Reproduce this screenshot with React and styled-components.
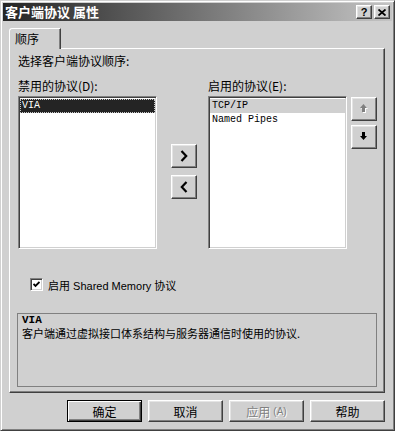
import React from 'react'
import styled, { createGlobalStyle } from 'styled-components'

const GlobalStyle = createGlobalStyle`
  body {
    margin: 0;
    background: #d0d0d0;
  }
  * {
    box-sizing: border-box;
  }
`

const ui = `'Noto Sans CJK SC', 'Liberation Sans', sans-serif`
const mono = `'Liberation Mono', 'Noto Sans CJK SC', monospace`

const Window = styled.div`
  width: 395px;
  height: 431px;
  display: flex;
  flex-direction: column;
  padding: 2px;
  background: #d0d0d0;
  border: 1px solid;
  border-color: #d0d0d0 #404040 #404040 #d0d0d0;
  box-shadow: inset 1px 1px #fff, inset -1px -1px #808080;
  font-family: ${ui};
  font-size: 12px;
  color: #000;
`

const TitleBar = styled.div`
  height: 18px;
  display: flex;
  align-items: center;
  padding: 0 2px 0 2px;
  background: linear-gradient(to right, #242424, #c4c4c4);
`

const TitleText = styled.div`
  flex: 1;
  color: #fff;
  font-weight: 700;
  font-size: 13px;
  line-height: 18px;
  white-space: pre;
`

const TitleButtons = styled.div`
  display: flex;
  gap: 2px;
`

const Raised = styled.button`
  display: flex;
  align-items: center;
  justify-content: center;
  padding: 0;
  background: #d0d0d0;
  border: 1px solid;
  border-color: #fff #404040 #404040 #fff;
  box-shadow: inset -1px -1px #808080, inset 1px 1px #e4e4e4;
  font-family: ${ui};
  color: #000;
`

const TitleButton = styled(Raised)`
  width: 16px;
  height: 14px;
  font-family: 'Liberation Sans', sans-serif;
  font-weight: 700;
  font-size: 11px;
  line-height: 1;
`

const Body = styled.div`
  display: flex;
  flex-direction: column;
  padding: 7px 7px 0 6px;
`

const TabStrip = styled.div`
  display: flex;
`

const Tab = styled.div`
  position: relative;
  z-index: 1;
  width: 52px;
  height: 21px;
  margin-bottom: -1px;
  padding: 0 0 1px 5px;
  display: flex;
  align-items: center;
  background: #d0d0d0;
  border: 1px solid;
  border-bottom: none;
  border-color: #fff #404040 transparent #fff;
  border-top-left-radius: 3px;
  box-shadow: inset -1px 0 #808080;
  font-size: 12px;
`

const Panel = styled.div`
  width: 376px;
  height: 345px;
  display: flex;
  flex-direction: column;
  padding: 5px 0 0 8px;
  border: 1px solid;
  border-color: #fff #404040 #404040 #fff;
  box-shadow: inset -1px -1px #808080;
`

const Line = styled.div`
  font-size: 12px;
  line-height: 14px;
  white-space: nowrap;
`

const ListsRow = styled.div`
  display: flex;
  align-items: flex-start;
  margin-top: 11px;
`

const ListColumn = styled.div`
  display: flex;
  flex-direction: column;
  gap: 3px;
  width: 139px;
`

const ListBox = styled.div`
  height: 153px;
  padding: 2px 1px 1px 1px;
  background: #fff;
  border: 1px solid;
  border-color: #808080 #fff #fff #808080;
  box-shadow: inset 1px 1px #404040, inset -1px -1px #d0d0d0;
`

const ListItem = styled.div`
  height: 14px;
  padding-left: 2px;
  font-family: ${mono};
  font-size: 10px;
  line-height: 14px;
  white-space: pre;
  background: ${(p) => (p.$focused ? '#242424' : p.$selected ? '#d0d0d0' : 'transparent')};
  color: ${(p) => (p.$focused ? '#fff' : '#000')};
  outline: ${(p) => (p.$focused ? '1px dotted #c8c8c8' : 'none')};
  outline-offset: -1px;
`

const ButtonStack = styled.div`
  display: flex;
  flex-direction: column;
  gap: ${(p) => p.$gap}px;
  margin: ${(p) => p.$top}px ${(p) => p.$right}px 0 ${(p) => p.$left}px;
`

const SquareButton = styled(Raised)`
  width: 26px;
  height: 24px;
`

const CheckRow = styled.label`
  display: flex;
  align-items: center;
  gap: 5px;
  margin: 29px 0 0 12px;
  height: 13px;
  font-family: 'Liberation Sans', 'Noto Sans CJK SC', sans-serif;
  font-size: 11px;
  white-space: pre;
`

const CheckBox = styled.span`
  width: 13px;
  height: 13px;
  display: flex;
  align-items: center;
  justify-content: center;
  background: #fff;
  border: 1px solid;
  border-color: #808080 #fff #fff #808080;
  box-shadow: inset 1px 1px #404040, inset -1px -1px #d0d0d0;
`

const DescBox = styled.div`
  width: 360px;
  height: 74px;
  margin: 22px 0 0 -1px;
  padding: 0 4px;
  border: 1px solid #808080;
`

const DescTitle = styled.div`
  font-family: ${mono};
  font-weight: 700;
  font-size: 11px;
  line-height: 13px;
`

const DescText = styled.div`
  font-family: ${ui};
  font-size: 11px;
  line-height: 13px;
  white-space: nowrap;
`

const Footer = styled.div`
  display: flex;
  justify-content: flex-end;
  gap: 6px;
  margin-top: 7px;
`

const DialogButton = styled(Raised)`
  width: 75px;
  height: 22px;
  font-size: 12px;
  ${(p) =>
    p.$default &&
    `
    border: 1px solid #000;
    box-shadow: inset 1px 1px #fff, inset -1px -1px #404040, inset -2px -2px #808080;
  `}
  &:disabled {
    color: #808080;
    text-shadow: 1px 1px #fff;
  }
`

const Small = styled.span`
  font-family: 'Liberation Sans', sans-serif;
  font-size: 10px;
  margin-left: 3px;
`

const Chevron = ({ left }) => (
  <svg width="8" height="12" viewBox="0 0 8 12">
    <polyline
      points={left ? '6.5,1 1.8,6 6.5,11' : '1.5,1 6.2,6 1.5,11'}
      fill="none"
      stroke="#000"
      strokeWidth="2.2"
    />
  </svg>
)

const Arrow = ({ down, disabled }) => {
  const pts = down ? '2,0 5,0 5,4 7,4 3.5,8 0,4 2,4' : '3.5,0 7,4 5,4 5,8 2,8 2,4 0,4'
  return (
    <svg width="9" height="10" viewBox="0 0 9 10">
      {disabled && <polygon points={pts} fill="#fff" transform="translate(1 1)" />}
      <polygon points={pts} fill={disabled ? '#808080' : '#000'} />
    </svg>
  )
}

const CloseGlyph = () => (
  <svg width="8" height="7" viewBox="0 0 8 7">
    <path d="M0.5 0.5 L7.5 6.5 M7.5 0.5 L0.5 6.5" stroke="#000" strokeWidth="1.8" />
  </svg>
)

const Check = () => (
  <svg width="7" height="7" viewBox="0 0 7 7">
    <polyline points="0.5,3 2.5,5 6.5,1" fill="none" stroke="#000" strokeWidth="1.8" />
  </svg>
)

const App = () => {
  return (
    <>
      <GlobalStyle />
      <Window>
        <TitleBar>
          <TitleText>客户端协议 属性</TitleText>
          <TitleButtons>
            <TitleButton>?</TitleButton>
            <TitleButton>
              <CloseGlyph />
            </TitleButton>
          </TitleButtons>
        </TitleBar>
        <Body>
          <TabStrip>
            <Tab>顺序</Tab>
          </TabStrip>
          <Panel>
            <Line>选择客户端协议顺序:</Line>
            <ListsRow>
              <ListColumn>
                <Line>禁用的协议(D):</Line>
                <ListBox>
                  <ListItem $focused>VIA</ListItem>
                </ListBox>
              </ListColumn>
              <ButtonStack $top={65} $gap={7} $left={14} $right={11}>
                <SquareButton>
                  <Chevron />
                </SquareButton>
                <SquareButton>
                  <Chevron left />
                </SquareButton>
              </ButtonStack>
              <ListColumn>
                <Line>启用的协议(E):</Line>
                <ListBox>
                  <ListItem $selected>TCP/IP</ListItem>
                  <ListItem>Named Pipes</ListItem>
                </ListBox>
              </ListColumn>
              <ButtonStack $top={18} $gap={4} $left={4} $right={0}>
                <SquareButton>
                  <Arrow disabled />
                </SquareButton>
                <SquareButton>
                  <Arrow down />
                </SquareButton>
              </ButtonStack>
            </ListsRow>
            <CheckRow>
              <CheckBox>
                <Check />
              </CheckBox>
              启用 Shared Memory 协议
            </CheckRow>
            <DescBox>
              <DescTitle>VIA</DescTitle>
              <DescText>客户端通过虚拟接口体系结构与服务器通信时使用的协议.</DescText>
            </DescBox>
          </Panel>
          <Footer>
            <DialogButton $default>确定</DialogButton>
            <DialogButton>取消</DialogButton>
            <DialogButton disabled>
              应用<Small>(A)</Small>
            </DialogButton>
            <DialogButton>帮助</DialogButton>
          </Footer>
        </Body>
      </Window>
    </>
  )
}

export default App
